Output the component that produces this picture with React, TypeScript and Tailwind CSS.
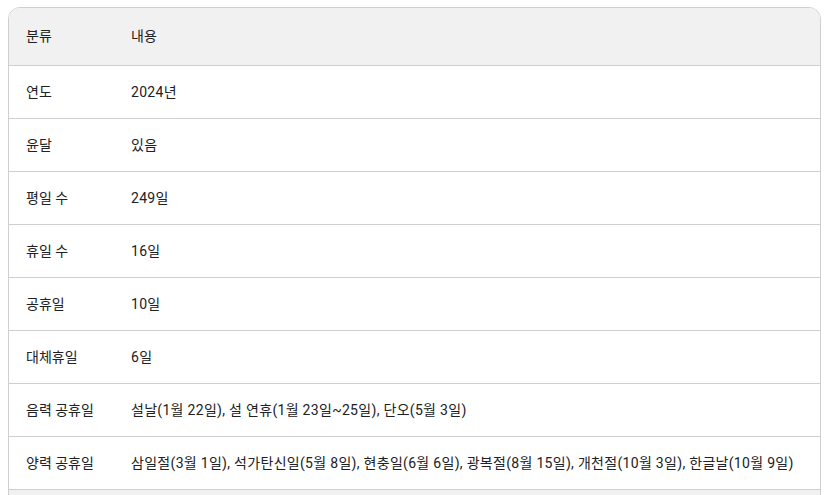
import React from 'react'

const rows = [
    { label: '연도', value: '2024년' },
    { label: '윤달', value: '있음' },
    { label: '평일 수', value: '249일' },
    { label: '휴일 수', value: '16일' },
    { label: '공휴일', value: '10일' },
    { label: '대체휴일', value: '6일' },
    { label: '음력 공휴일', value: '설날(1월 22일), 설 연휴(1월 23일~25일), 단오(5월 3일)' },
    {
        label: '양력 공휴일',
        value: '삼일절(3월 1일), 석가탄신일(5월 8일), 현충일(6월 6일), 광복절(8월 15일), 개천절(10월 3일), 한글날(10월 9일)',
    },
]

export default function App() {
    return (
        <div className="h-[495px] overflow-hidden bg-white pl-2 pt-[7px] font-['Roboto','Noto_Sans_CJK_KR',sans-serif] text-[14px] text-[#202124]">
            <div className="w-[813px] overflow-hidden rounded-t-[12px] border border-[#cfcfcf]">
                {/* Header */}
                <div className="flex h-[58px] items-center border-b border-[#cfcfcf] bg-[#f1f1f1]">
                    <div className="w-[105px] shrink-0 pl-[17px]">분류</div>
                    <div className="pl-[17px]">내용</div>
                </div>

                {rows.map((row) => (
                    <div key={row.label} className="flex h-[53px] items-center border-b border-[#cfcfcf]">
                        <div className="w-[105px] shrink-0 pl-[17px]">{row.label}</div>
                        <div className="whitespace-nowrap pl-[17px] tracking-[0.3px]">{row.value}</div>
                    </div>
                ))}

                <div className="h-[40px] bg-[#f1f1f1]" />
            </div>
        </div>
    )
}
